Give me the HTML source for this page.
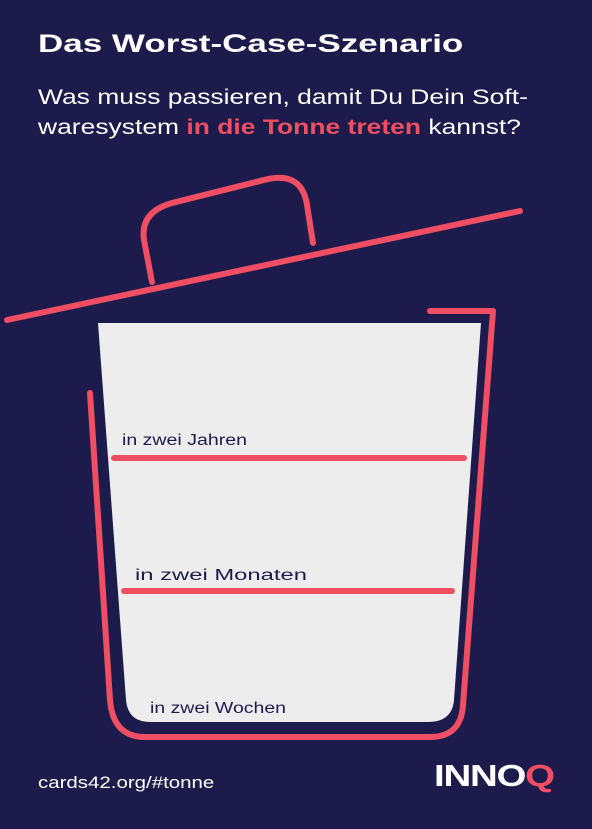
<!DOCTYPE html>
<html><head><style>
html,body{margin:0;padding:0;}
body{width:592px;height:829px;background:#1d1b4c;position:relative;overflow:hidden;font-family:"Liberation Sans",sans-serif;color:#fff;}
.s{position:absolute;transform-origin:0 0;white-space:nowrap;}
h1{left:38px;top:30px;margin:0;font-size:25px;font-weight:bold;transform:scaleX(1.40);}
.sub{left:38px;top:82px;font-size:21.5px;line-height:30px;transform:scaleX(1.23);}
.sub b{color:#f04e62;}
.foot{left:38px;top:774px;font-size:16.5px;transform:scaleX(1.24);}
.logo{left:434px;top:758px;font-size:31px;font-weight:900;letter-spacing:-1px;transform:scaleX(1.24);}
.logo span{color:#f04e62;}
svg{position:absolute;left:0;top:0;}
</style></head><body>
<h1 class="s">Das Worst-Case-Szenario</h1>
<div class="s sub">Was muss passieren, damit Du Dein Soft-<br>waresystem <b>in die Tonne treten</b> kannst?</div>
<svg width="592" height="829">
<g fill="none" stroke="#f04e62" stroke-width="6" stroke-linecap="round" stroke-linejoin="round">
<line x1="7" y1="320" x2="520" y2="211"/>
<path d="M152 282 L144 240 Q140 212 172 203 L268 179 Q302 172 307 205 L313 243"/>
<path d="M90 393 L110 700 Q113 737 145 737 L430 737 Q461 737 463 705 L493 311 L430 311"/>
</g>
<path d="M98 323 L481 323 L454 700 Q452 722 428 722 L150 722 Q128 722 126 700 Z" fill="#ededed"/>
<g stroke="#f04e62" stroke-width="6" stroke-linecap="round">
<line x1="114" y1="458" x2="464" y2="458"/>
<line x1="124" y1="591" x2="452" y2="591"/>
</g>
<g fill="#1d1b4c" font-family="Liberation Sans, sans-serif" font-size="15.5">
<text x="122" y="445" textLength="125" lengthAdjust="spacingAndGlyphs">in zwei Jahren</text>
<text x="135" y="580" textLength="172" lengthAdjust="spacingAndGlyphs">in zwei Monaten</text>
<text x="150" y="713" textLength="136" lengthAdjust="spacingAndGlyphs">in zwei Wochen</text>
</g>
</svg>
<div class="s foot">cards42.org/#tonne</div>
<div class="s logo">INNO<span>Q</span></div>
</body></html>
